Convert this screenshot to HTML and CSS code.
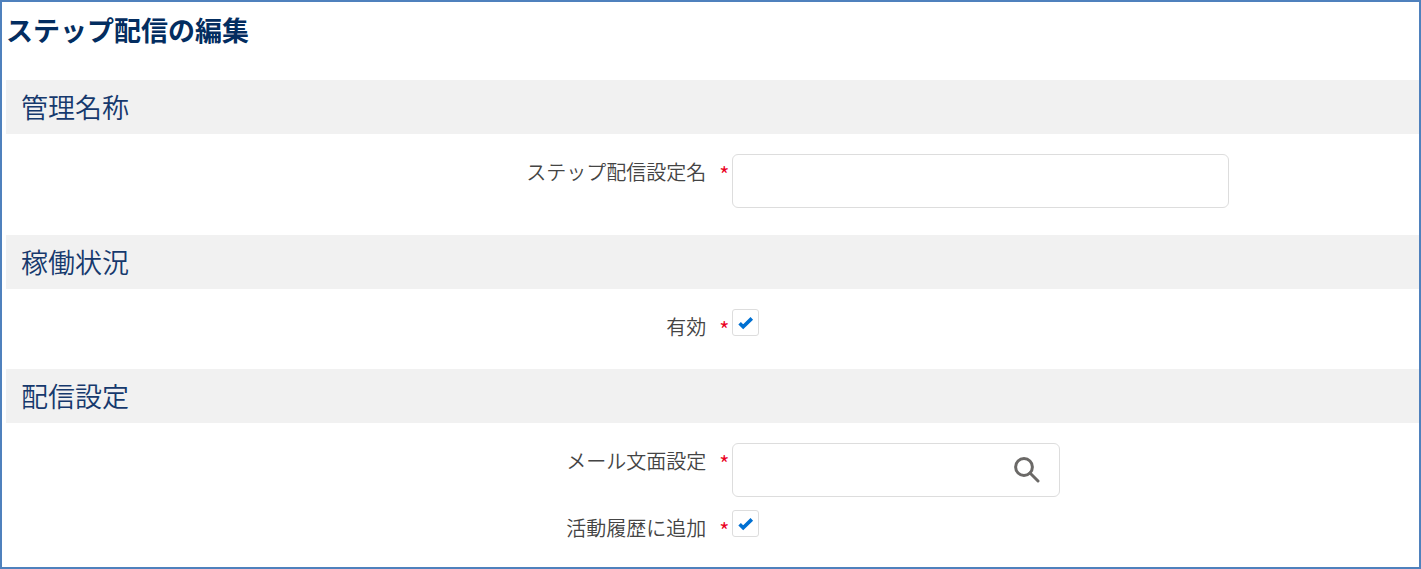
FILE: index.html
```html
<!DOCTYPE html>
<html lang="ja">
<head>
<meta charset="utf-8">
<meta name="viewport" content="width=device-width, initial-scale=1">
<title>ステップ配信の編集</title>
<link rel="stylesheet" href="styles.css">
</head>
<body>
<main class="page">
  <h1 class="page-title">ステップ配信の編集</h1>
  <form class="edit-form">
    <section class="section">
      <h2 class="section-title">管理名称</h2>
      <div class="section-body">
        <div class="row">
          <label class="label" for="name">ステップ配信設定名<span class="required">*</span></label>
          <div class="field"><input class="text-input" id="name" type="text"></div>
        </div>
      </div>
    </section>
    <section class="section">
      <h2 class="section-title">稼働状況</h2>
      <div class="section-body">
        <div class="row">
          <label class="label" for="active">有効<span class="required">*</span></label>
          <div class="field check">
            <input class="checkbox" id="active" type="checkbox" checked>
            <svg class="check-mark" viewBox="0 0 27 27" aria-hidden="true"><path d="M7.6 14.3 11.2 17.8 19.8 9.4"/></svg>
          </div>
        </div>
      </div>
    </section>
    <section class="section">
      <h2 class="section-title">配信設定</h2>
      <div class="section-body">
        <div class="row">
          <label class="label" for="template">メール文面設定<span class="required">*</span></label>
          <div class="field">
            <div class="lookup">
              <input class="lookup-input" id="template" type="text">
              <button class="lookup-button" type="button" aria-label="検索">
                <svg class="search-icon" viewBox="0 0 26 26" aria-hidden="true"><circle cx="10" cy="10" r="8.4"/><path d="M16 16 24 24"/></svg>
              </button>
            </div>
          </div>
        </div>
        <div class="row">
          <label class="label" for="history">活動履歴に追加<span class="required">*</span></label>
          <div class="field check">
            <input class="checkbox" id="history" type="checkbox" checked>
            <svg class="check-mark" viewBox="0 0 27 27" aria-hidden="true"><path d="M7.6 14.3 11.2 17.8 19.8 9.4"/></svg>
          </div>
        </div>
      </div>
    </section>
  </form>
</main>
</body>
</html>
```

FILE: styles.css
```css
* {
  box-sizing: border-box;
}

body {
  margin: 0;
  background: #fff;
  color: #444;
  font-family: "Noto Sans CJK JP", sans-serif;
  font-size: 20px;
  font-weight: 350;
}

.page {
  min-height: 100vh;
  padding: 8px 0 0 4px;
  border: 2px solid #4f81bd;
}

.page-title {
  margin: 0 0 30px;
  color: #032d60;
  font-size: 27px;
  font-weight: 700;
  line-height: 40px;
}

.section-title {
  margin: 0;
  padding: 7px 15px;
  background: #f1f1f1;
  color: #16396d;
  font-size: 27px;
  font-weight: 350;
  line-height: 40px;
}

.section-body {
  display: flex;
  flex-direction: column;
  gap: 13px;
  padding: 20px 0 27px;
}

.section:last-child .section-body {
  padding-bottom: 20px;
}

.row {
  display: grid;
  grid-template-columns: 51.4% 1fr;
  align-items: start;
}

.label {
  padding: 3px 3px 0 0;
  line-height: 30px;
  text-align: right;
}

.required {
  display: inline-block;
  margin-left: 13px;
  color: #ea001e;
  font-size: 22px;
  line-height: 20px;
  vertical-align: -4px;
}

.text-input,
.lookup {
  display: block;
  height: 54px;
  border: 1px solid #ddd;
  border-radius: 6px;
  background: #fff;
}

.text-input {
  width: 72.3%;
  padding: 0 15px;
  font: inherit;
}

.lookup {
  display: flex;
  width: 47.7%;
}

.lookup-input {
  flex: 1;
  min-width: 0;
  padding: 0 15px;
  border: 0;
  border-radius: 6px;
  background: transparent;
  font: inherit;
}

.lookup-button {
  display: flex;
  align-items: center;
  padding: 0 19px;
  border: 0;
  background: transparent;
}

.search-icon {
  width: 26px;
  height: 26px;
  fill: none;
  stroke: #6b6967;
  stroke-width: 3;
  stroke-linecap: round;
}

.check {
  display: grid;
  justify-content: start;
}

.checkbox,
.check-mark {
  grid-area: 1 / 1;
  width: 27px;
  height: 27px;
}

.checkbox {
  margin: 0;
  border: 1px solid #ddd;
  border-radius: 3px;
  background: #fff;
  appearance: none;
}

.check-mark {
  visibility: hidden;
  fill: none;
  stroke: #0070d2;
  stroke-width: 3.6;
  pointer-events: none;
}

.checkbox:checked + .check-mark {
  visibility: visible;
}
```
